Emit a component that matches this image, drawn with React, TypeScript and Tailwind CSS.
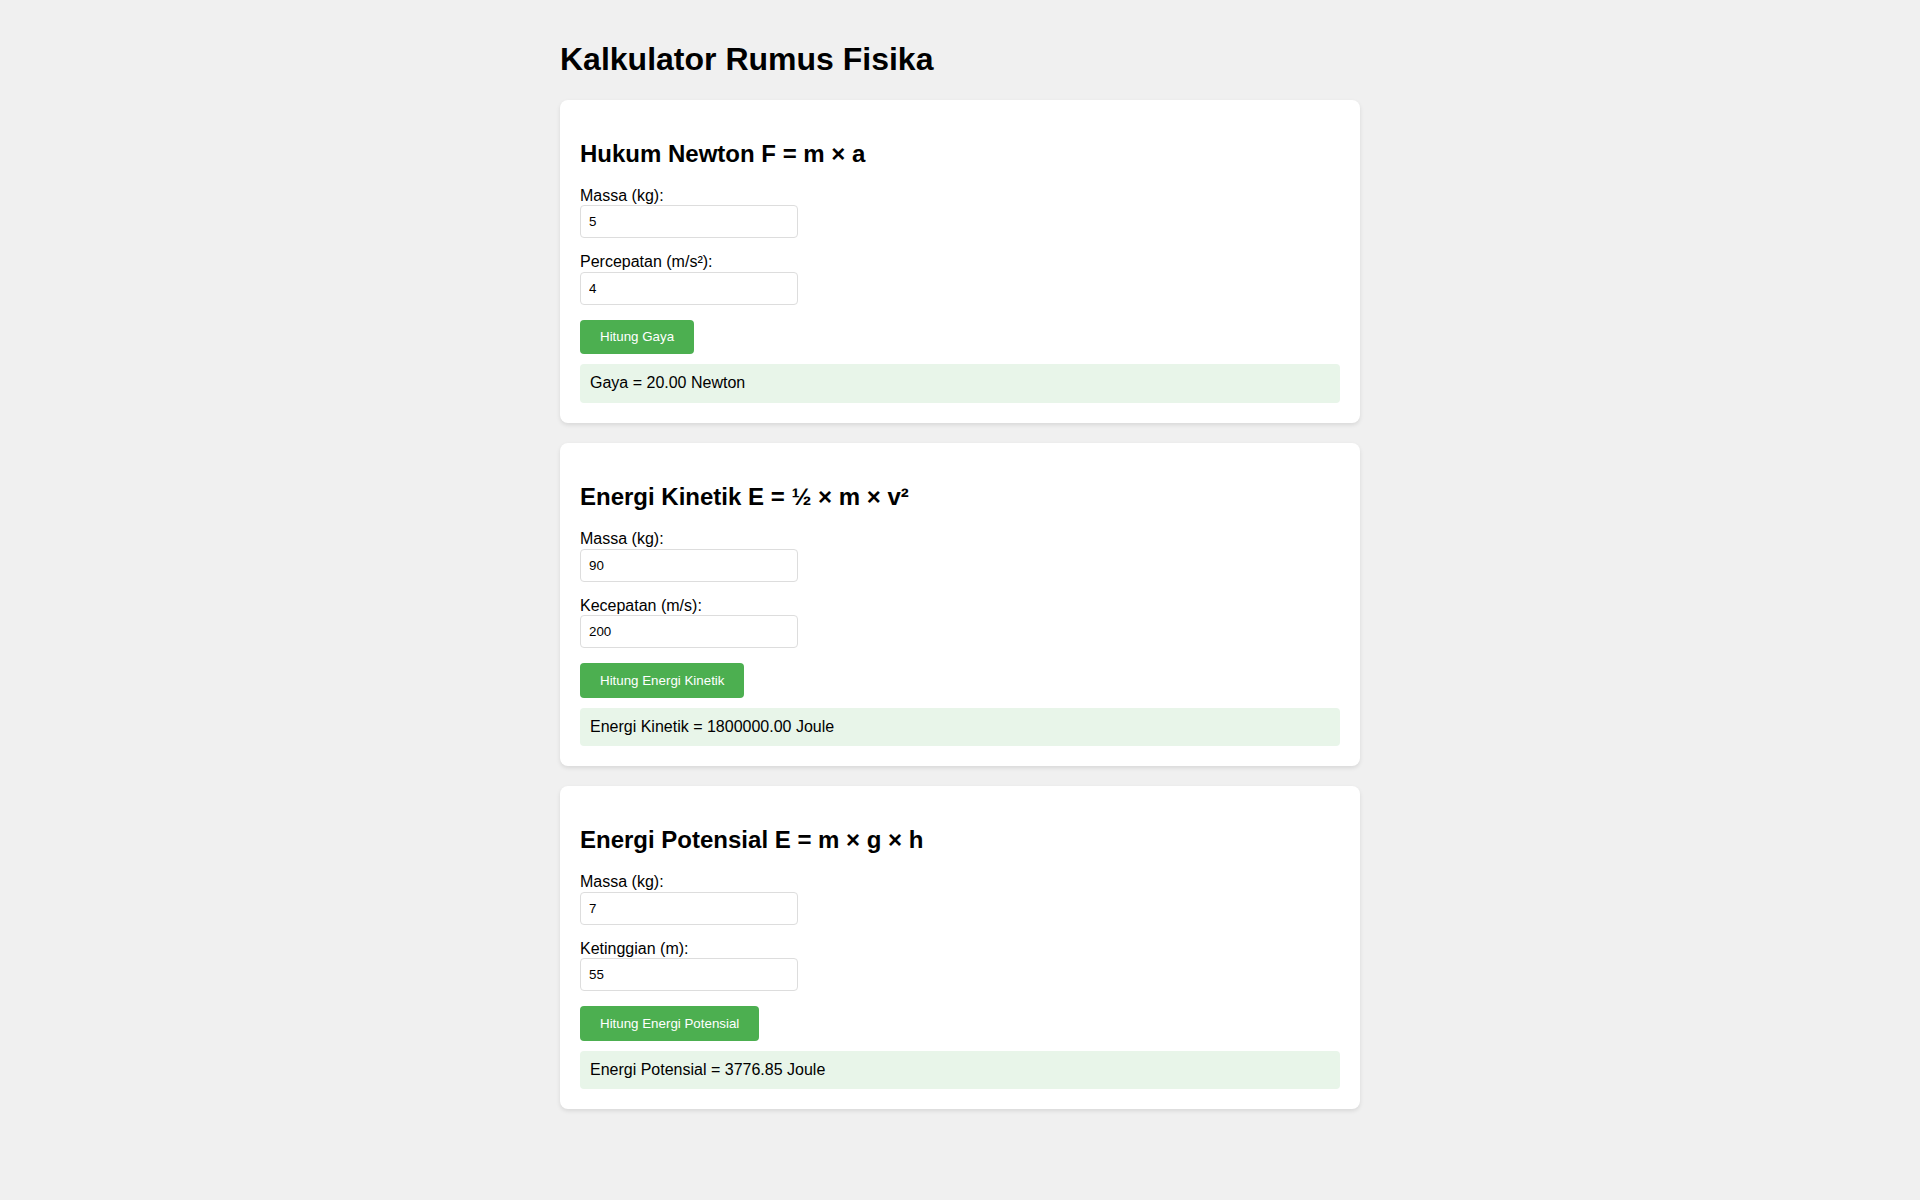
import { useState } from "react";

type Field = { label: string; value: string };

type Calc = {
  title: string;
  fields: Field[];
  button: string;
  compute: (a: number, b: number) => string;
};

const CALCS: Calc[] = [
  {
    title: "Hukum Newton F = m × a",
    fields: [
      { label: "Massa (kg):", value: "5" },
      { label: "Percepatan (m/s²):", value: "4" },
    ],
    button: "Hitung Gaya",
    compute: (m, a) => `Gaya = ${(m * a).toFixed(2)} Newton`,
  },
  {
    title: "Energi Kinetik E = ½ × m × v²",
    fields: [
      { label: "Massa (kg):", value: "90" },
      { label: "Kecepatan (m/s):", value: "200" },
    ],
    button: "Hitung Energi Kinetik",
    compute: (m, v) => `Energi Kinetik = ${(0.5 * m * v * v).toFixed(2)} Joule`,
  },
  {
    title: "Energi Potensial E = m × g × h",
    fields: [
      { label: "Massa (kg):", value: "7" },
      { label: "Ketinggian (m):", value: "55" },
    ],
    button: "Hitung Energi Potensial",
    compute: (m, h) => `Energi Potensial = ${(m * 9.81 * h).toFixed(2)} Joule`,
  },
];

function CalcCard({ calc }: { calc: Calc }) {
  const [values, setValues] = useState(calc.fields.map((f) => f.value));
  const [result, setResult] = useState(() =>
    calc.compute(Number(calc.fields[0].value), Number(calc.fields[1].value))
  );

  return (
    <section className="mb-5 rounded-lg bg-white p-5 shadow-[0_2px_4px_rgba(0,0,0,0.1)]">
      <h2 className="my-[19.92px] text-[24px] font-bold leading-[27.6px]">{calc.title}</h2>
      {calc.fields.map((field, i) => (
        <div key={field.label} className="mb-[15px]">
          <label className="block text-base leading-[18.4px]">{field.label}</label>
          <input
            type="number"
            value={values[i]}
            onChange={(e) => {
              const next = [...values];
              next[i] = e.target.value;
              setValues(next);
            }}
            className="block h-[33px] w-[218px] rounded border border-[#ddd] bg-white px-2 text-[13.33px] outline-none [appearance:textfield]"
          />
        </div>
      ))}
      <button
        onClick={() => setResult(calc.compute(Number(values[0]), Number(values[1])))}
        className="h-[34.5px] cursor-pointer rounded bg-[#4caf50] px-5 text-[13.33px] leading-none text-white"
      >
        {calc.button}
      </button>
      <div className="mt-[10px] rounded bg-[#e8f5e9] p-[10px] text-base leading-[18.4px]">{result}</div>
    </section>
  );
}

export default function App() {
  return (
    <div className="min-h-screen bg-[#f0f0f0] px-5 pt-5 pb-5 font-['Liberation_Sans',Arial,sans-serif] text-black">
      <div className="mx-auto max-w-[800px]">
        <h1 className="my-[21.44px] text-[32px] font-bold leading-[36.8px]">Kalkulator Rumus Fisika</h1>
        {CALCS.map((calc) => (
          <CalcCard key={calc.button} calc={calc} />
        ))}
      </div>
    </div>
  );
}
